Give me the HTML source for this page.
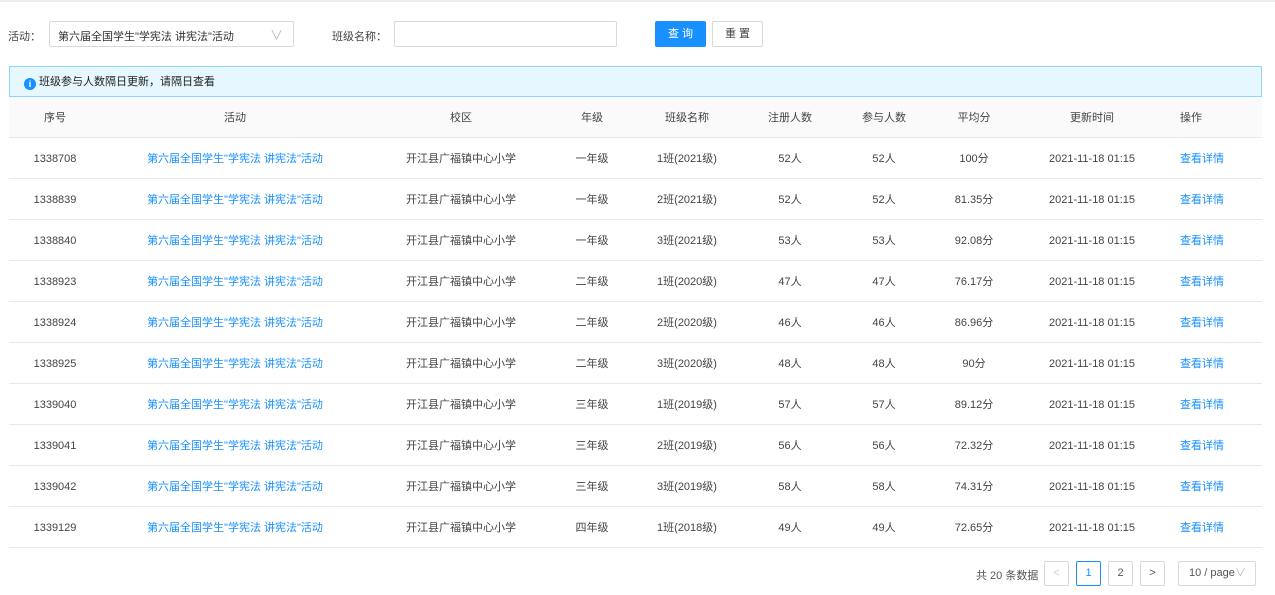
<!DOCTYPE html>
<html><head><meta charset="utf-8"><style>
*{margin:0;padding:0;box-sizing:border-box}
body{width:1275px;height:595px;background:#fff;font-family:"Liberation Sans","Noto Sans CJK SC",sans-serif;font-size:11px;color:#444;position:relative;overflow:hidden}
.a{position:absolute}
.c{position:absolute;transform:translateX(-50%);white-space:nowrap;line-height:14px}
.row{position:absolute;left:9px;width:1253px;height:41px;border-bottom:1px solid #e8e8e8}
.lk{color:#1890ff}
.pg{position:absolute;top:561px;width:25px;height:25px;border:1px solid #d9d9d9;border-radius:2px;text-align:center;line-height:23px;color:#555;background:#fff}
</style></head><body>
<div class="a" style="left:0;top:0;width:1275px;height:2px;background:#eceef2"></div>
<div class="a" style="left:8px;top:28px">活动：</div>
<div class="a" style="left:49px;top:21px;width:245px;height:26px;border:1px solid #d9d9d9;border-radius:2px;padding:6px 8px;color:#333">第六届全国学生"学宪法 讲宪法"活动<span style="position:absolute;right:10px;top:3px;color:#bbb;font-size:13px">∨</span></div>
<div class="a" style="left:332px;top:28px">班级名称：</div>
<div class="a" style="left:394px;top:21px;width:223px;height:26px;border:1px solid #d9d9d9;border-radius:2px"></div>
<div class="a" style="left:655px;top:21px;width:51px;height:26px;background:#1890ff;color:#fff;border-radius:2px;text-align:center;line-height:26px">查 询</div>
<div class="a" style="left:712px;top:21px;width:51px;height:26px;border:1px solid #d9d9d9;border-radius:2px;text-align:center;line-height:24px">重 置</div>
<div class="a" style="left:9px;top:66px;width:1253px;height:31px;background:#e6f7ff;border:1px solid #91d5ff;padding-left:14px;line-height:30px;color:#222"><span style="display:inline-block;width:12px;height:12px;border-radius:50%;background:#1890ff;color:#fff;font-size:9px;line-height:12px;text-align:center;vertical-align:-2px;margin-right:3px;font-weight:bold">i</span>班级参与人数隔日更新，请隔日查看</div>
<div class="row" style="top:97px;background:#fafafa"></div>
<div id="t"></div>
<div class="a" style="left:976px;top:567px;color:#555">共 20 条数据</div>
<div class="pg" style="left:1044px;color:#ccc">&lt;</div>
<div class="pg" style="left:1076px;border-color:#1890ff;color:#1890ff">1</div>
<div class="pg" style="left:1108px">2</div>
<div class="pg" style="left:1140px">&gt;</div>
<div class="a" style="left:1178px;top:561px;width:78px;height:25px;border:1px solid #d9d9d9;border-radius:2px;line-height:23px;padding-left:10px;color:#555">10 / page<span style="color:#bbb">∨</span></div>
<script>
var cx=[55,235,461,592,687,790,884,974,1092,1202];
var h=["序号","活动","校区","年级","班级名称","注册人数","参与人数","平均分","更新时间","操作"];
var d=[["1338708","一年级","1班(2021级)","52","100分"],["1338839","一年级","2班(2021级)","52","81.35分"],["1338840","一年级","3班(2021级)","53","92.08分"],["1338923","二年级","1班(2020级)","47","76.17分"],["1338924","二年级","2班(2020级)","46","86.96分"],["1338925","二年级","3班(2020级)","48","90分"],["1339040","三年级","1班(2019级)","57","89.12分"],["1339041","三年级","2班(2019级)","56","72.32分"],["1339042","三年级","3班(2019级)","58","74.31分"],["1339129","四年级","1班(2018级)","49","72.65分"]];
var s="";
function cell(x,y,t,cls){return '<div class="c '+(cls||'')+'" style="left:'+x+'px;top:'+y+'px">'+t+'</div>';}
for(var i=0;i<10;i++){var hx=i==9?1191:cx[i];s+=cell(hx,111,h[i]);}
for(var r=0;r<10;r++){var y=152+41*r,e=d[r];
s+='<div class="row" style="top:'+(138+41*r)+'px"></div>';
var v=[e[0],'第六届全国学生"学宪法 讲宪法"活动','开江县广福镇中心小学',e[1],e[2],e[3]+'人',e[3]+'人',e[4],'2021-11-18 01:15','查看详情'];
for(var i=0;i<10;i++){var x=i==9?1202:cx[i];s+=cell(x,y,v[i],(i==1||i==9)?'lk':'');}}
document.getElementById('t').innerHTML=s;
</script>
</body></html>
